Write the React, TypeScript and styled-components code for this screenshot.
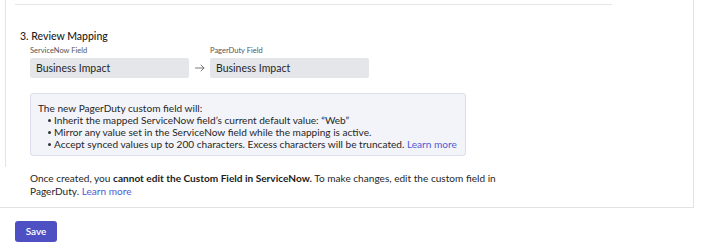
import styled, { createGlobalStyle } from "styled-components";

const GlobalStyle = createGlobalStyle`
	body {
		margin: 0;
		background: #ffffff;
		font-family: Lato, "Liberation Sans", sans-serif;
		color: #262626;
	}
`;

export default function App() {
	const rules = [
		<>Inherit the mapped ServiceNow field’s current default value: “Web”</>,
		<>Mirror any value set in the ServiceNow field while the mapping is active.</>,
		<>
			Accept synced values up to 200 characters. Excess characters will be
			truncated. <Link href="#">Learn more</Link>
		</>,
	];

	return (
		<>
			<GlobalStyle />
			<Panel>
				<StepRail>
					<Divider />
					<Heading>3. Review Mapping</Heading>
					<Mapping>
						<Field>
							<Label>ServiceNow Field</Label>
							<ValueBox>Business Impact</ValueBox>
						</Field>
						<Arrow>
							<svg width="10" height="8" viewBox="0 0 10 8" fill="none">
								<path
									d="M0.5 4H9M6 1l3 3-3 3"
									stroke="#6b6b6b"
									strokeWidth="0.9"
									strokeLinecap="round"
									strokeLinejoin="round"
								/>
							</svg>
						</Arrow>
						<Field>
							<Label>PagerDuty Field</Label>
							<ValueBox>Business Impact</ValueBox>
						</Field>
					</Mapping>
					<InfoBox>
						<InfoLine>The new PagerDuty custom field will:</InfoLine>
						{rules.map((r, i) => (
							<Item key={i}>
								<Dot />
								<span>{r}</span>
							</Item>
						))}
					</InfoBox>
				</StepRail>
				<Note>
					Once created, you <b>cannot edit the Custom Field in ServiceNow.</b> To
					make changes, edit the custom field in PagerDuty.{" "}
					<Link href="#">Learn more</Link>
				</Note>
			</Panel>
			<Footer>
				<SaveButton>Save</SaveButton>
			</Footer>
		</>
	);
}

const Panel = styled.div`
	width: 693px;
	border-right: 1px solid #e2e2e2;
	border-bottom: 1px solid #e2e2e2;
	padding-bottom: 9px;
`;

const StepRail = styled.div`
	margin-left: 5px;
	border-left: 1px solid #e4e4e4;
	padding: 4px 0 11px 9px;
`;

const Divider = styled.div`
	width: 597px;
	border-top: 1px solid #e6e6e6;
`;

const Heading = styled.h3`
	margin: 24px 0 0 5px;
	font-size: 10.5px;
	line-height: 14px;
	font-weight: 500;
	color: #1c1c1c;
`;

const Mapping = styled.div`
	display: flex;
	align-items: flex-end;
	margin: 3px 0 0 15px;
`;

const Field = styled.div`
	display: flex;
	flex-direction: column;
	gap: 2px;
`;

const Label = styled.span`
	font-size: 7.5px;
	line-height: 10px;
	color: #555555;
`;

const ValueBox = styled.div`
	width: 153px;
	height: 20px;
	padding-left: 6px;
	display: flex;
	align-items: center;
	background: #e4e6ea;
	border-radius: 2px;
	font-size: 10.5px;
	color: #262626;
`;

const Arrow = styled.div`
	width: 21px;
	height: 20px;
	display: flex;
	align-items: center;
	justify-content: center;
`;

const InfoBox = styled.div`
	width: 420px;
	margin: 15px 0 0 15px;
	padding: 8px 7px 5px 7px;
	background: #f3f4f9;
	border: 1px solid #dcdded;
	border-radius: 3px;
	font-size: 10.1px;
	line-height: 12px;
	color: #262626;
`;

const InfoLine = styled.div``;

const Item = styled.div`
	display: flex;
	align-items: center;
	padding-left: 10px;
`;

const Dot = styled.span`
	width: 3px;
	height: 3px;
	border-radius: 50%;
	background: #333333;
	margin-right: 3px;
	flex-shrink: 0;
`;

const Link = styled.a`
	color: #4b5bd6;
	text-decoration: none;
`;

const Note = styled.p`
	margin: 5px 0 0 30px;
	max-width: 495px;
	font-size: 10.1px;
	line-height: 13px;
	color: #262626;

	b {
		font-weight: 700;
		color: #1c1c1c;
	}
`;

const Footer = styled.div`
	padding: 11px 0 0 15px;
`;

const SaveButton = styled.button`
	width: 42px;
	height: 21px;
	border: none;
	border-radius: 3px;
	background: #4d4fc2;
	color: #ffffff;
	font-family: Lato, "Liberation Sans", sans-serif;
	font-size: 10px;
	font-weight: 600;
	padding: 0;
`;
